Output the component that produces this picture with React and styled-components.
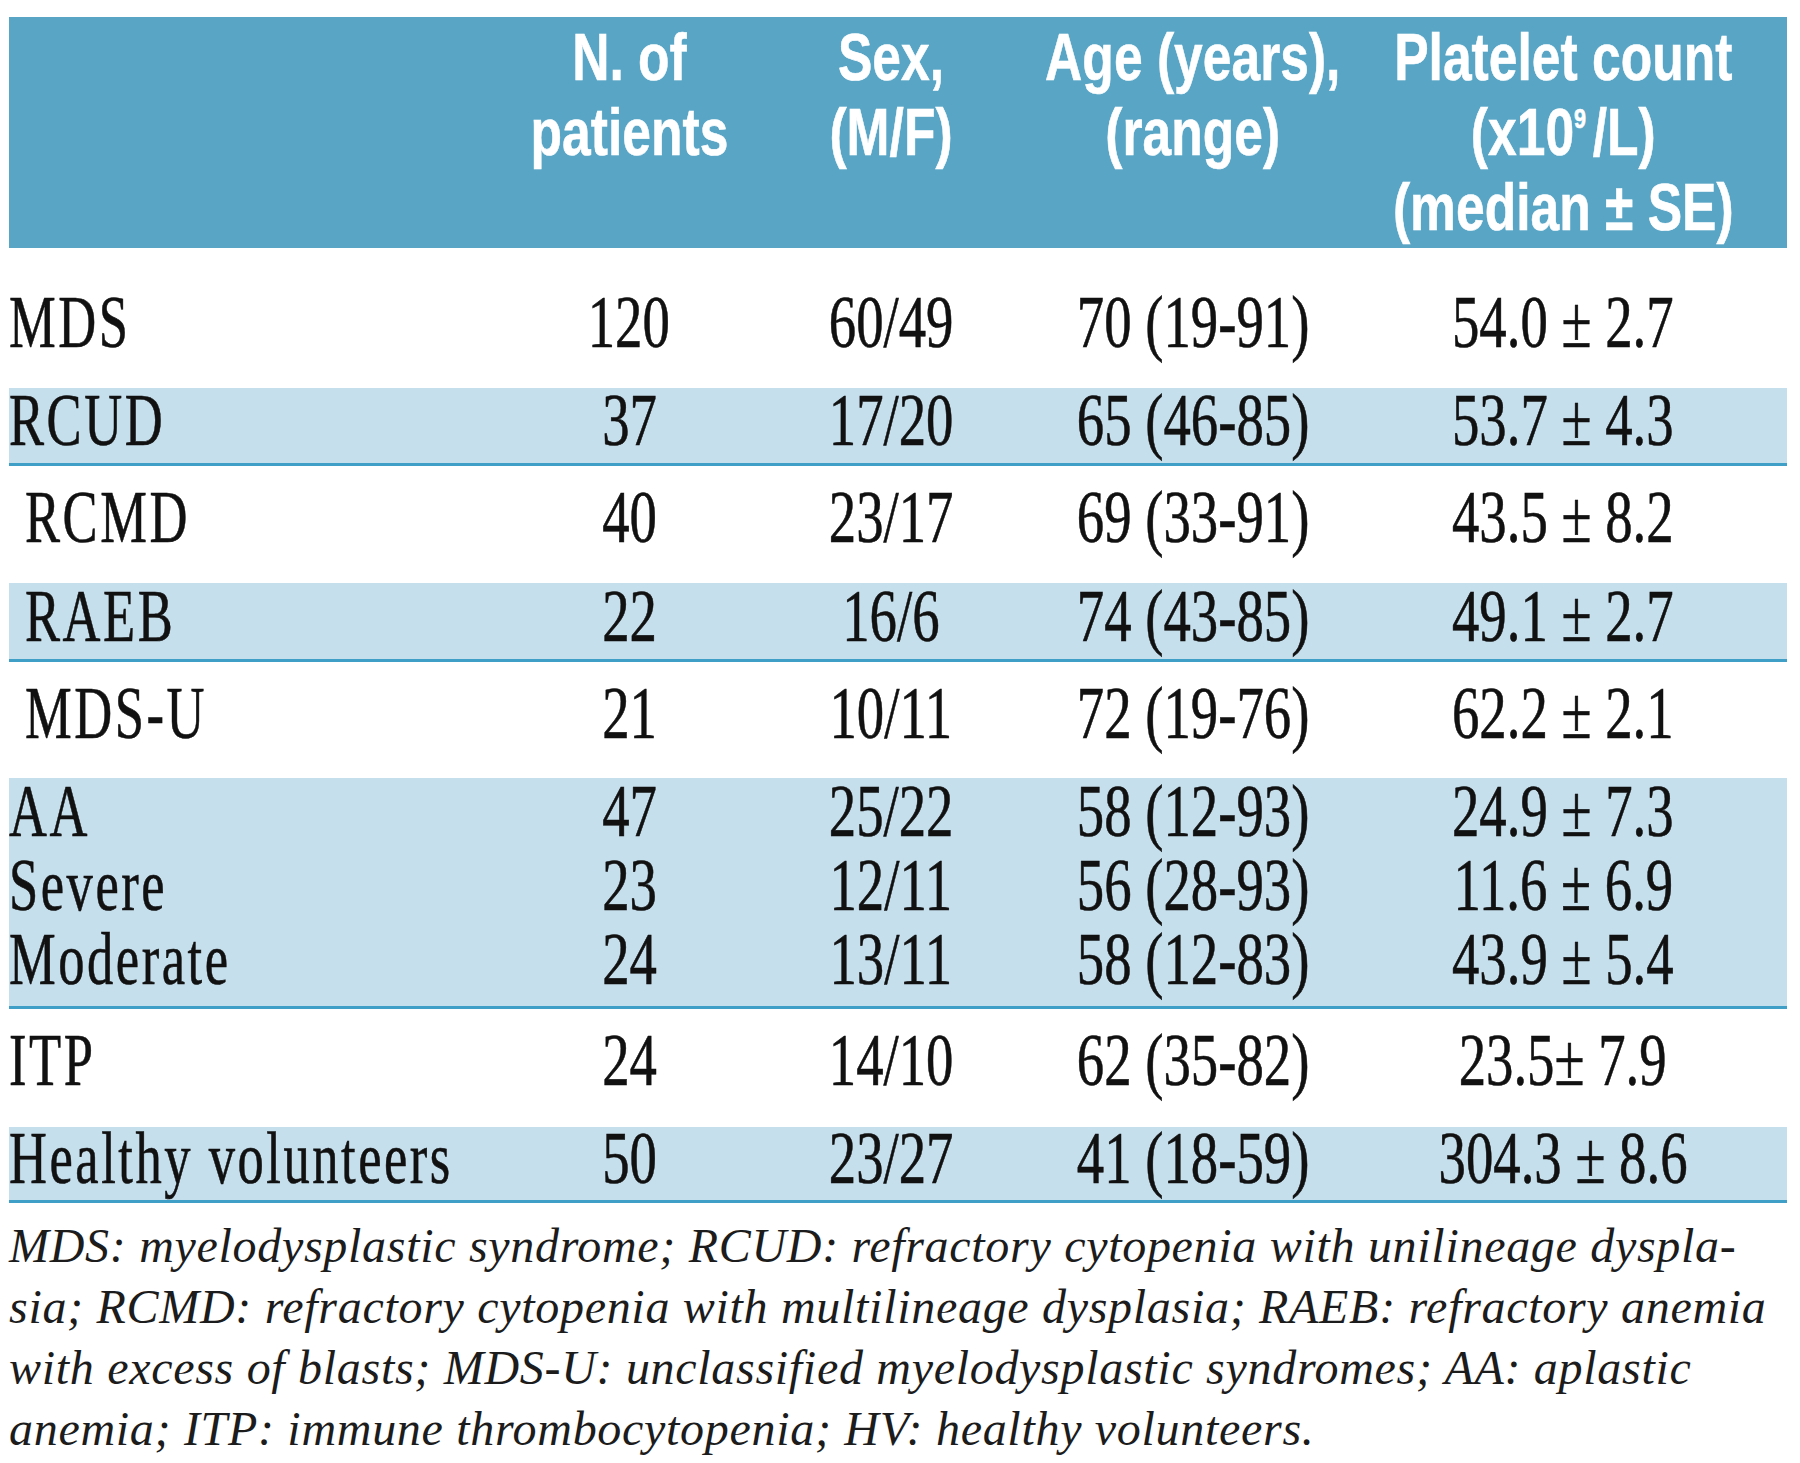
import React from "react";
import styled, { createGlobalStyle } from "styled-components";

const Global = createGlobalStyle`
  html, body { margin: 0; padding: 0; background: #ffffff; }
  body { width: 1800px; min-height: 1463px; }
`;

const COLS = "489px 262px 262px 342px 398px";

const Table = styled.div`
  margin: 17px 0 0 9px;
  width: 1778px;
  display: flex;
  flex-direction: column;
`;

const HeaderRow = styled.div`
  display: grid;
  grid-template-columns: ${COLS};
  padding: 2px 25px 4px 0;
  background: #58a5c6;
`;

const HeadCell = styled.div`
  display: flex;
  flex-direction: column;
  align-items: center;
`;

const HeadText = styled.div`
  font-family: "Liberation Sans", Arial, sans-serif;
  font-weight: 700;
  font-size: 67px;
  line-height: 75px;
  color: #ffffff;
  white-space: nowrap;
  text-align: center;
  transform: scaleX(0.77);
  transform-origin: center;
  -webkit-text-stroke: 0.6px #ffffff;
  sup {
    font-size: 0.42em;
    line-height: 0;
    vertical-align: 0;
    position: relative;
    top: -0.95em;
    margin-right: 0.3em;
  }
`;

const Band = styled.div`
  display: flex;
  flex-direction: column;
  gap: ${(p) => p.$gap || 0}px;
  background: ${(p) => (p.$shaded ? "#c6dfec" : "transparent")};
  border-bottom: ${(p) => (p.$shaded ? "3px solid #3f9fc6" : "0")};
  padding: ${(p) => p.$pt}px 0 ${(p) => p.$pb}px;
`;

const SubRow = styled.div`
  display: grid;
  grid-template-columns: ${COLS};
  padding-right: 25px;
`;

const LabelCell = styled.div`
  display: flex;
  align-items: center;
  height: 50px;
  padding-left: ${(p) => (p.$indent ? 16 : 0)}px;
`;

const ValueCell = styled.div`
  display: flex;
  align-items: center;
  justify-content: center;
  height: 50px;
`;

const Cond = styled.span`
  display: inline-block;
  font-family: "Liberation Serif", "Times New Roman", serif;
  font-size: 73px;
  line-height: 50px;
  color: #111111;
  white-space: nowrap;
  -webkit-text-stroke: 0.6px #111111;
  transform: scaleX(${(p) => (p.$left ? 0.72 : 0.75)});
  letter-spacing: ${(p) => (p.$left ? 3.5 : 0)}px;
  transform-origin: ${(p) => (p.$left ? "left center" : "center")};
`;

const Footnote = styled.p`
  margin: 0;
  padding: 12px 0 0 0;
  font-family: "Liberation Serif", "Times New Roman", serif;
  font-style: italic;
  font-size: 48px;
  letter-spacing: 0.7px;
  line-height: 61px;
  color: #1c1c1c;
  white-space: nowrap;
`;

const rows = [
  { group: [["MDS", false, "120", "60/49", "70 (19-91)", "54.0 ± 2.7"]], shaded: false, pt: 50, pb: 40 },
  { group: [["RCUD", false, "37", "17/20", "65 (46-85)", "53.7 ± 4.3"]], shaded: true, pt: 8, pb: 17 },
  { group: [["RCMD", true, "40", "23/17", "69 (33-91)", "43.5 ± 8.2"]], shaded: false, pt: 27, pb: 40 },
  { group: [["RAEB", true, "22", "16/6", "74 (43-85)", "49.1 ± 2.7"]], shaded: true, pt: 9, pb: 17 },
  { group: [["MDS-U", true, "21", "10/11", "72 (19-76)", "62.2 ± 2.1"]], shaded: false, pt: 27, pb: 39 },
  {
    group: [
      ["AA", false, "47", "25/22", "58 (12-93)", "24.9 ± 7.3"],
      ["Severe", false, "23", "12/11", "56 (28-93)", "11.6 ± 6.9"],
      ["Moderate", false, "24", "13/11", "58 (12-83)", "43.9 ± 5.4"],
    ],
    shaded: true,
    pt: 9,
    pb: 21,
  },
  { group: [["ITP", false, "24", "14/10", "62 (35-82)", "23.5± 7.9"]], shaded: false, pt: 27, pb: 41 },
  { group: [["Healthy volunteers", false, "50", "23/27", "41 (18-59)", "304.3 ± 8.6"]], shaded: true, pt: 7, pb: 16 },
];

export default function App() {
  return (
    <>
      <Global />
      <Table>
        <HeaderRow>
          <HeadCell />
          <HeadCell>
            <HeadText>
              N. of
              <br />
              patients
            </HeadText>
          </HeadCell>
          <HeadCell>
            <HeadText>
              Sex,
              <br />
              (M/F)
            </HeadText>
          </HeadCell>
          <HeadCell>
            <HeadText>
              Age (years),
              <br />
              (range)
            </HeadText>
          </HeadCell>
          <HeadCell>
            <HeadText>
              Platelet count
              <br />
              (x10<sup>9</sup>/L)
              <br />
              (median ± SE)
            </HeadText>
          </HeadCell>
        </HeaderRow>

        {rows.map((r, i) => (
          <Band key={i} $shaded={r.shaded} $pt={r.pt} $pb={r.pb} $gap={24}>
            {r.group.map((c, j) => (
              <SubRow key={j}>
                <LabelCell $indent={c[1]}>
                  <Cond $left>{c[0]}</Cond>
                </LabelCell>
                <ValueCell>
                  <Cond>{c[2]}</Cond>
                </ValueCell>
                <ValueCell>
                  <Cond>{c[3]}</Cond>
                </ValueCell>
                <ValueCell>
                  <Cond>{c[4]}</Cond>
                </ValueCell>
                <ValueCell>
                  <Cond>{c[5]}</Cond>
                </ValueCell>
              </SubRow>
            ))}
          </Band>
        ))}

        <Footnote>
          MDS: myelodysplastic syndrome; RCUD: refractory cytopenia with unilineage dyspla-
          <br />
          sia; RCMD: refractory cytopenia with multilineage dysplasia; RAEB: refractory anemia
          <br />
          with excess of blasts; MDS-U: unclassified myelodysplastic syndromes; AA: aplastic
          <br />
          anemia; ITP: immune thrombocytopenia; HV: healthy volunteers.
        </Footnote>
      </Table>
    </>
  );
}
